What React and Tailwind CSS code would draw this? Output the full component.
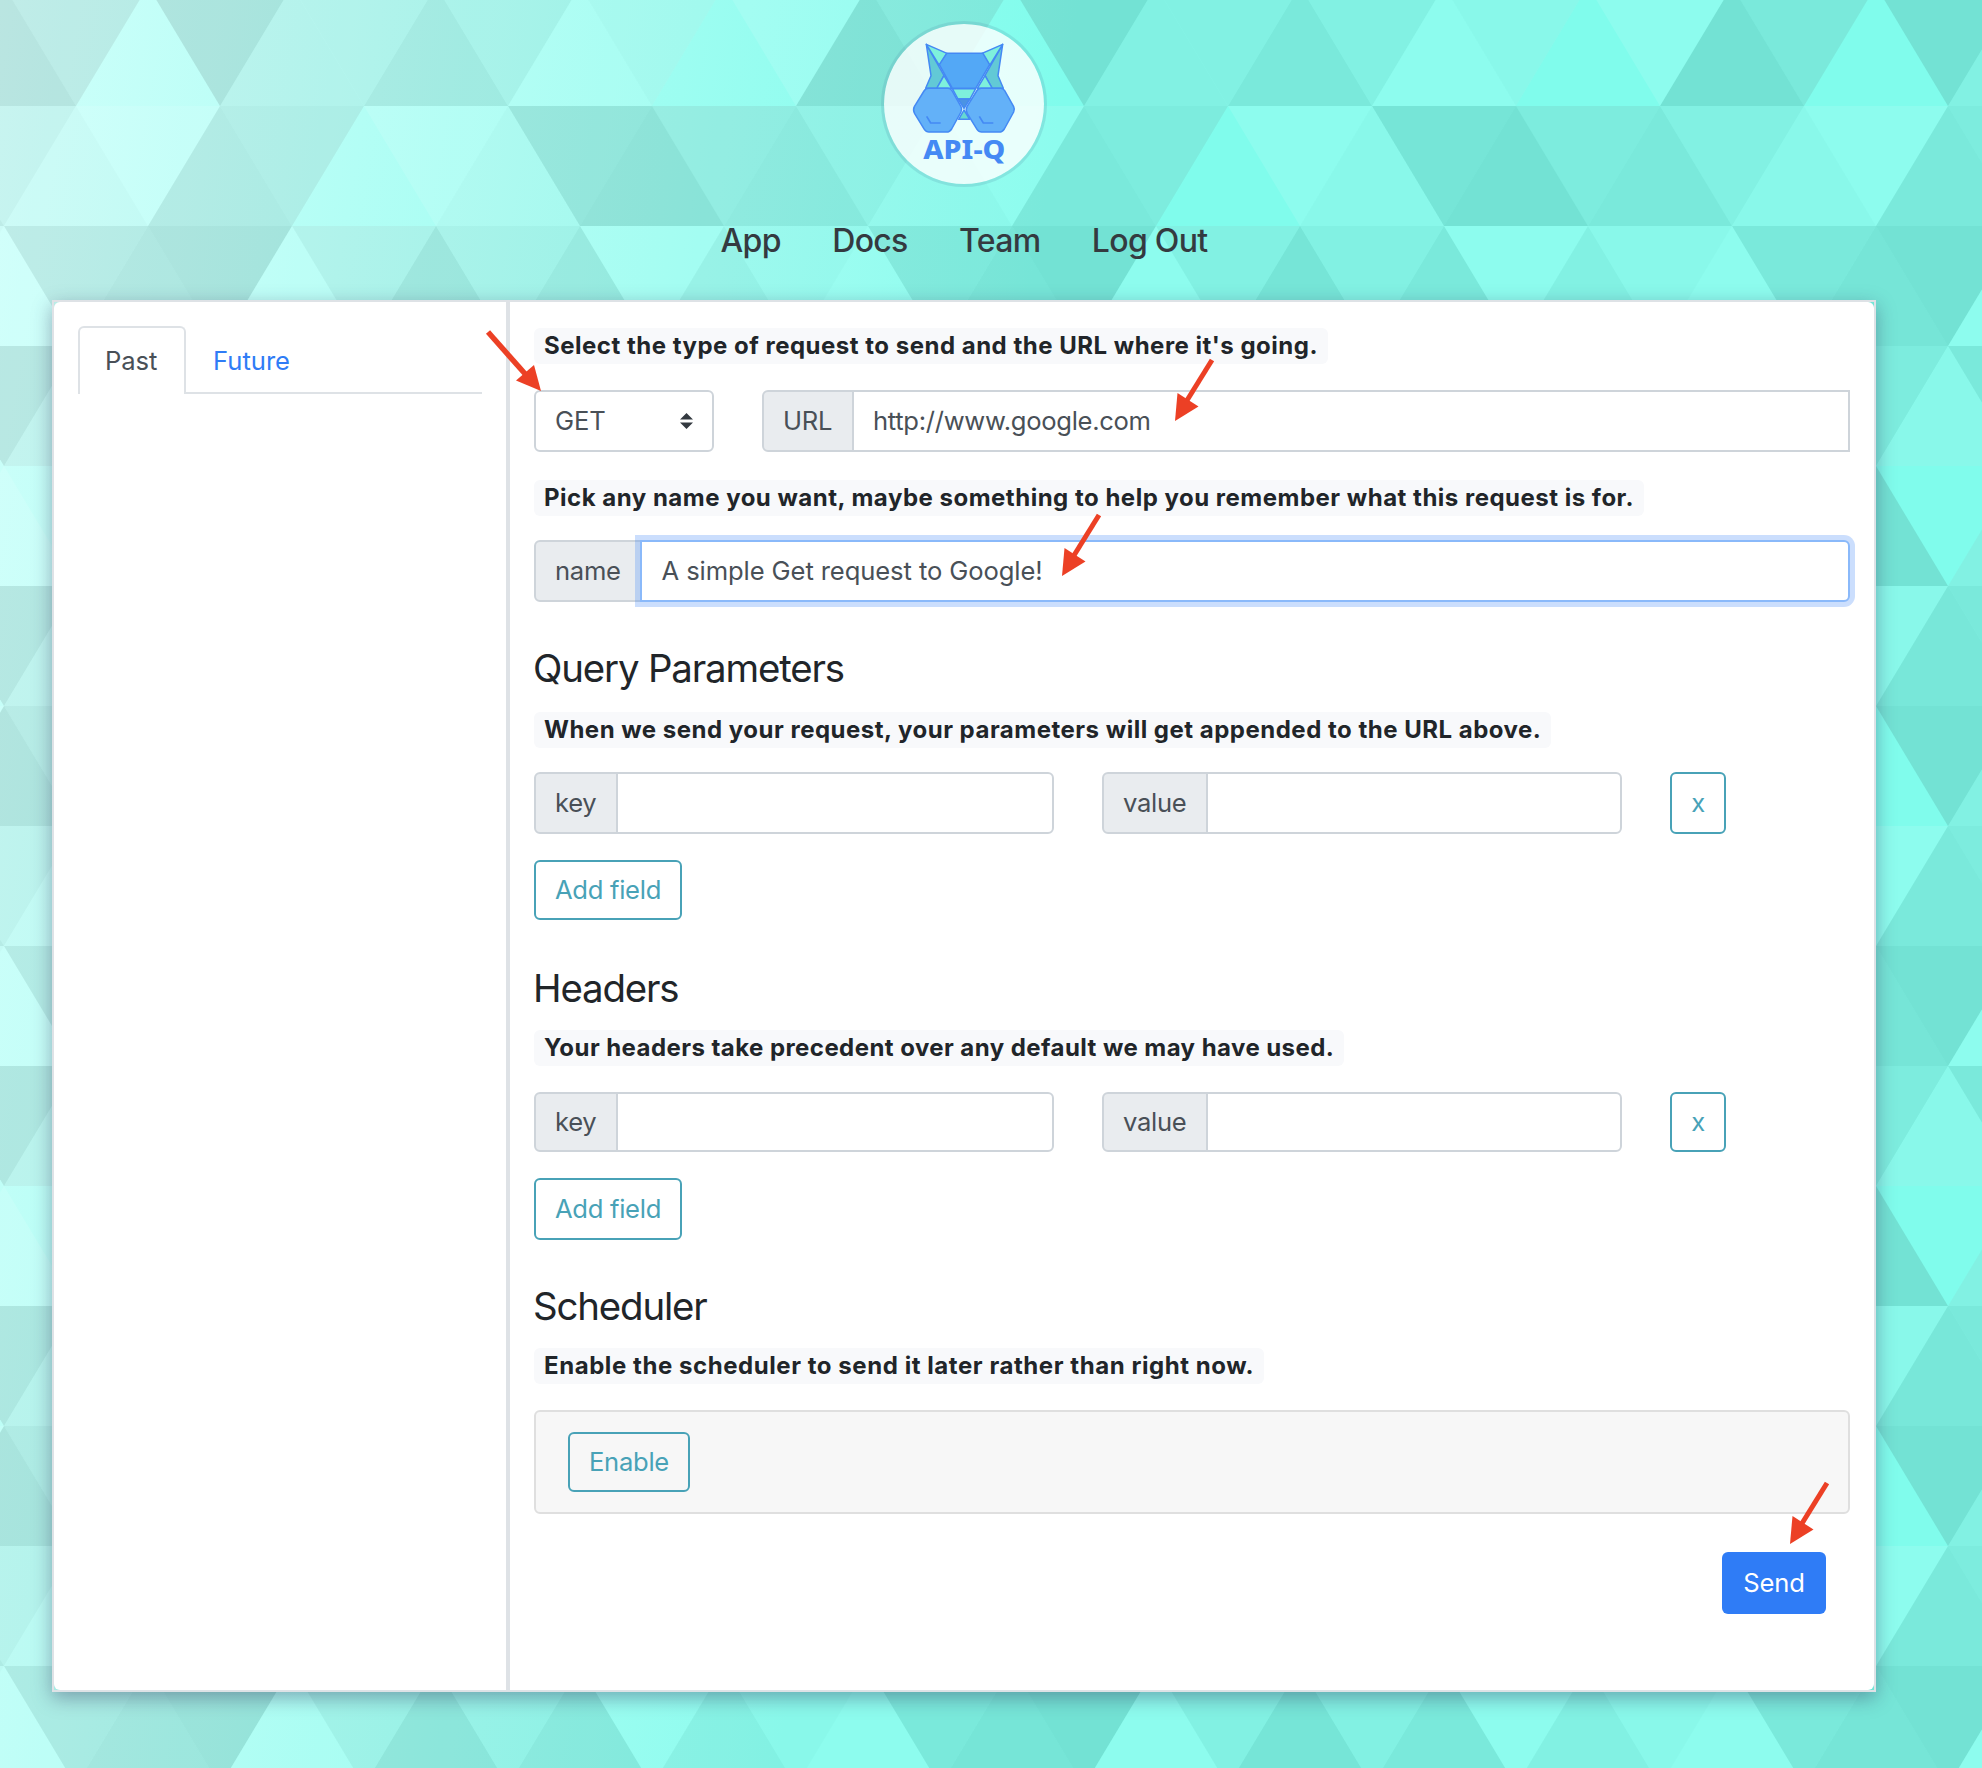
import React from "react";

/* Backdrop: tile of 6 x 6 triangle pairs, each 144 x 120, with a 10% grey tint.
   `x` is the apex of the triangle inside the 864px wide tile. */
const UP = "up";
const DOWN = "down";
const ROWS = [
  [
    [UP, 4, "#000"], [DOWN, 76, "#444"], [DOWN, 220, "#000"], [UP, 292, "#999"],
    [DOWN, 364, "#999"], [UP, 436, "#444"], [DOWN, 508, "#999"], [UP, 580, "#fff"],
    [DOWN, 652, "#ddd"], [DOWN, 796, "#fff"],
  ],
  [
    [DOWN, 4, "#999"], [UP, 76, "#ddd"], [DOWN, 148, "#fff"], [UP, 220, "#444"],
    [DOWN, 292, "#666"], [DOWN, 436, "#fff"], [UP, 508, "#ddd"], [DOWN, 580, "#222"],
    [UP, 652, "#000"], [DOWN, 724, "#666"], [UP, 796, "#444"],
  ],
  [
    [UP, 4, "#fff"], [DOWN, 76, "#444"], [UP, 148, "#222"], [DOWN, 220, "#000"],
    [UP, 292, "#fff"], [DOWN, 364, "#999"], [UP, 436, "#222"], [DOWN, 508, "#999"],
    [UP, 580, "#444"], [DOWN, 652, "#fff"], [UP, 724, "#999"], [DOWN, 796, "#ddd"],
  ],
  [
    [DOWN, 4, "#222"], [UP, 76, "#999"], [DOWN, 148, "#666"], [UP, 220, "#ddd"],
    [DOWN, 292, "#444"],
  ],
  [[UP, 4, "#fff"], [UP, 148, "#000"], [UP, 292, "#999"]],
  [
    [DOWN, 4, "#222"], [UP, 76, "#999"], [DOWN, 148, "#ddd"], [UP, 220, "#333"],
    [DOWN, 292, "#444"],
  ],
];

function trianglePoints(dir, x, row) {
  const top = row * 120;
  return dir === UP
    ? `${x},${top} ${x - 72},${top + 120} ${x + 72},${top + 120}`
    : `${x},${top + 120} ${x - 72},${top} ${x + 72},${top}`;
}

function Backdrop() {
  return (
    <svg className="absolute inset-0 h-full w-full" aria-hidden="true">
      <defs>
        <linearGradient id="mint" gradientUnits="userSpaceOnUse" x1="0" y1="0" x2="1050" y2="180">
          <stop offset="0" stopColor="#cffffa" />
          <stop offset="1" stopColor="#80fcec" />
        </linearGradient>
        <pattern id="triangles" patternUnits="userSpaceOnUse" width="864" height="720" y="-14">
          <g fillOpacity="0.1">
            {ROWS.map((row, r) =>
              row.flatMap(([dir, x, fill]) =>
                (x < 72 ? [x, x + 864] : x > 792 ? [x, x - 864] : [x]).map((px) => (
                  <polygon key={`${r}${dir}${px}`} fill={fill} points={trianglePoints(dir, px, r)} />
                ))
              )
            )}
          </g>
        </pattern>
      </defs>
      <rect width="100%" height="100%" fill="url(#mint)" />
      <rect width="100%" height="100%" fill="url(#triangles)" />
    </svg>
  );
}

function Ear() {
  return (
    <g>
      <polygon fill="#62c9d6" points="199,133 213,227 197,265 231,265 252,226" />
      <polygon fill="#7ef0dc" points="199,133 261,160 238,196" />
      <polygon fill="#7ef0dc" points="252,227 230,265 275,265" />
    </g>
  );
}

function Hexagon() {
  return (
    <g>
      <path
        fill="#63b1f8"
        d="M163,320 L192,273 Q197,265 206,265 L264,265 Q272,265 276,272 L303,320 Q307,328 303,336 L275,387 Q269,396 260,396 L207,396 Q198,396 193,388 L164,341 Q158,330 163,320 Z"
      />
      <path d="M200,349 L212,369 L242,369" fill="none" strokeWidth="5" />
    </g>
  );
}

function Logo() {
  return (
    <div className="h-[166px] w-[166px] rounded-full border-3 border-[#5aa5b5]/25 bg-white/80 bg-clip-padding">
      <svg viewBox="72 72 480 480" className="h-full w-full" role="img" aria-label="API-Q">
        <g stroke="#4489f4" strokeWidth="4.5" strokeLinejoin="round">
          <Ear />
          <g transform="translate(627 0) scale(-1 1)">
            <Ear />
          </g>
          <polygon fill="#53a8f6" points="260,160 369,160 389,194 347,265 277,265 238,194" />
          <polygon fill="#7ef0dc" points="277,266 347,266 330,297 294,297" />
          <polygon fill="#4b93e4" points="294,297 330,297 312,325" />
          <polygon fill="#66d8d2" points="312,330 296,358 329,358" />
          <Hexagon />
          <g transform="translate(158 0)">
            <Hexagon />
          </g>
        </g>
        <text
          x="190"
          y="477"
          fontFamily="Noto Sans, sans-serif"
          fontWeight="800"
          fontSize="80"
          fill="#4489f4"
          textLength="246"
          lengthAdjust="spacingAndGlyphs"
        >
          API-Q
        </text>
      </svg>
    </div>
  );
}

function Hint({ children, className = "", tracking = "tracking-[0.5px]" }) {
  return (
    <div
      className={`flex h-9 w-fit items-center rounded-md bg-[#f8f9fb] px-[10px] text-[24px] font-bold whitespace-nowrap text-[#212529] ${tracking} ${className}`}
    >
      {children}
    </div>
  );
}

function Heading({ children, className = "" }) {
  return (
    <h4
      className={`-ml-px h-[46px] text-[38.4px] leading-[46px] font-normal tracking-[-1.15px] text-[#212529] ${className}`}
    >
      {children}
    </h4>
  );
}

function Addon({ children, className = "" }) {
  return (
    <span
      className={`flex items-center rounded-l-md border-2 border-[#ced4da] bg-[#e9ecef] tracking-[-0.3px] text-[#495057] ${className}`}
    >
      <span className="pl-[19px]">{children}</span>
    </span>
  );
}

function OutlineButton({ children, className = "" }) {
  return (
    <button
      className={`flex items-center justify-center rounded-md border-2 border-[#48a2b7] tracking-[-0.28px] text-[#48a2b7] ${className}`}
    >
      {children}
    </button>
  );
}

function Pair({ className = "" }) {
  return (
    <div className={`flex gap-12 ${className}`}>
      <div className="flex w-[520px]">
        <Addon className="w-[84px]">key</Addon>
        <div className="-ml-[2px] flex-1 rounded-r-md border-2 border-[#ced4da]" />
      </div>
      <div className="flex w-[520px]">
        <Addon className="w-[106px]">value</Addon>
        <div className="-ml-[2px] flex-1 rounded-r-md border-2 border-[#ced4da]" />
      </div>
      <OutlineButton className="w-14">x</OutlineButton>
    </div>
  );
}

function Arrow({ className, flip = false }) {
  return (
    <svg className={`absolute ${className}`} width="60" height="70" viewBox="0 0 60 70" aria-hidden="true">
      {flip ? (
        <g fill="#ec4025">
          <path d="M4,4 L43,48" stroke="#ec4025" strokeWidth="5.5" />
          <polygon points="57,63 32,52.5 50,37" />
        </g>
      ) : (
        <g fill="#ec4025">
          <path d="M41,4 L15,46" stroke="#ec4025" strokeWidth="5" />
          <polygon points="4,65 6.500,37 27.500,50.500" />
        </g>
      )}
    </svg>
  );
}

export default function App() {
  return (
    <div className="relative h-[1768px] w-[1982px] overflow-hidden font-['Inter',sans-serif] text-[25.6px] leading-none">
      <Backdrop />

      <div className="relative flex w-[1876px] flex-col pt-[21px] pl-[52px]">
        <header className="flex flex-col items-center">
          <Logo />
          <nav className="mt-[34px] flex h-10 items-center gap-[51.5px] text-[32px] font-medium tracking-[-0.7px] text-[#343a40]">
            <a>App</a>
            <a>Docs</a>
            <a>Team</a>
            <a>Log Out</a>
          </nav>
        </header>

        <main className="mt-[39px] h-[1392px] w-[1824px] border-2 border-[#dee2e6] shadow-[0_6px_18px_rgba(50,50,93,0.4)]">
          <div className="flex h-full rounded-md bg-white">
            <aside className="w-[452px] pt-6 pr-[24px] pl-6">
              <div className="flex h-[68px]">
                <div className="flex w-[108px] items-center rounded-t-md border-2 border-b-0 border-[#dee2e6] pl-[25px] tracking-[-0.1px] text-[#495057]">
                  Past
                </div>
                <div className="flex flex-1 items-center border-b-2 border-[#dee2e6] pt-1 pl-[27px] text-[#2f7cf6]">
                  Future
                </div>
              </div>
            </aside>

            <section className="flex-1 border-l-4 border-[#dee2e6] pt-[26px] pr-6 pl-6">
              <Hint>Select the type of request to send and the URL where it's going.</Hint>
              <div className="mt-[26px] flex h-[62px] gap-12 text-[#495057]">
                <div className="flex w-[180px] items-center justify-between rounded-md border-2 border-[#ced4da] pr-[19px] pl-[19px] tracking-[-0.1px]">
                  GET
                  <svg width="13" height="16" viewBox="0 0 13 16" fill="#343a40" aria-hidden="true">
                    <path d="M6.500,0 L13,6.500 H0 Z M0,9.500 H13 L6.500,16 Z" />
                  </svg>
                </div>
                <div className="flex flex-1">
                  <Addon className="w-[92px]">URL</Addon>
                  <div className="-ml-[2px] flex flex-1 items-center border-2 border-[#ced4da] pl-[19px] tracking-[-0.3px]">
                    http://www.google.com
                  </div>
                </div>
              </div>

              <Hint className="mt-7">
                Pick any name you want, maybe something to help you remember what this request is for.
              </Hint>
              <div className="mt-6 flex h-[62px] text-[#495057]">
                <Addon className="w-[108px]">name</Addon>
                <div className="-ml-[2px] flex flex-1 items-center rounded-r-md border-2 border-[#8ab9fa] bg-white pl-[19.5px] tracking-[-0.1px] shadow-[0_0_0_5px_rgba(47,124,246,0.25)]">
                  A simple Get request to Google!
                </div>
              </div>

              <Heading className="mt-[43px]">Query Parameters</Heading>
              <Hint className="mt-[21px]">
                When we send your request, your parameters will get appended to the URL above.
              </Hint>
              <Pair className="mt-6 h-[62px]" />
              <OutlineButton className="mt-[26px] h-[60px] w-[148px]">Add field</OutlineButton>

              <Heading className="mt-[45px]">Headers</Heading>
              <Hint className="mt-[19px]" tracking="tracking-[0.44px]">
                Your headers take precedent over any default we may have used.
              </Hint>
              <Pair className="mt-[26px] h-[60px]" />
              <OutlineButton className="mt-[26px] h-[62px] w-[148px]">Add field</OutlineButton>

              <Heading className="mt-[43px]">Scheduler</Heading>
              <Hint className="mt-[19px]" tracking="tracking-[0.56px]">
                Enable the scheduler to send it later rather than right now.
              </Hint>
              <div className="mt-[26px] h-[104px] rounded-md border-2 border-[#dfdfdf] bg-[#f7f7f7] pt-5 pl-8">
                <OutlineButton className="h-[60px] w-[122px]">Enable</OutlineButton>
              </div>
              <div className="mt-[38px] flex justify-end pr-6">
                <button className="h-[62px] w-[104px] rounded-md bg-[#2f7cf6] tracking-[-0.2px] text-white">
                  Send
                </button>
              </div>
            </section>
          </div>
        </main>
      </div>

      <Arrow flip className="top-[328px] left-[484px]" />
      <Arrow className="top-[356px] left-[1171px]" />
      <Arrow className="top-[511px] left-[1058px]" />
      <Arrow className="top-[1479px] left-[1786px]" />
    </div>
  );
}
